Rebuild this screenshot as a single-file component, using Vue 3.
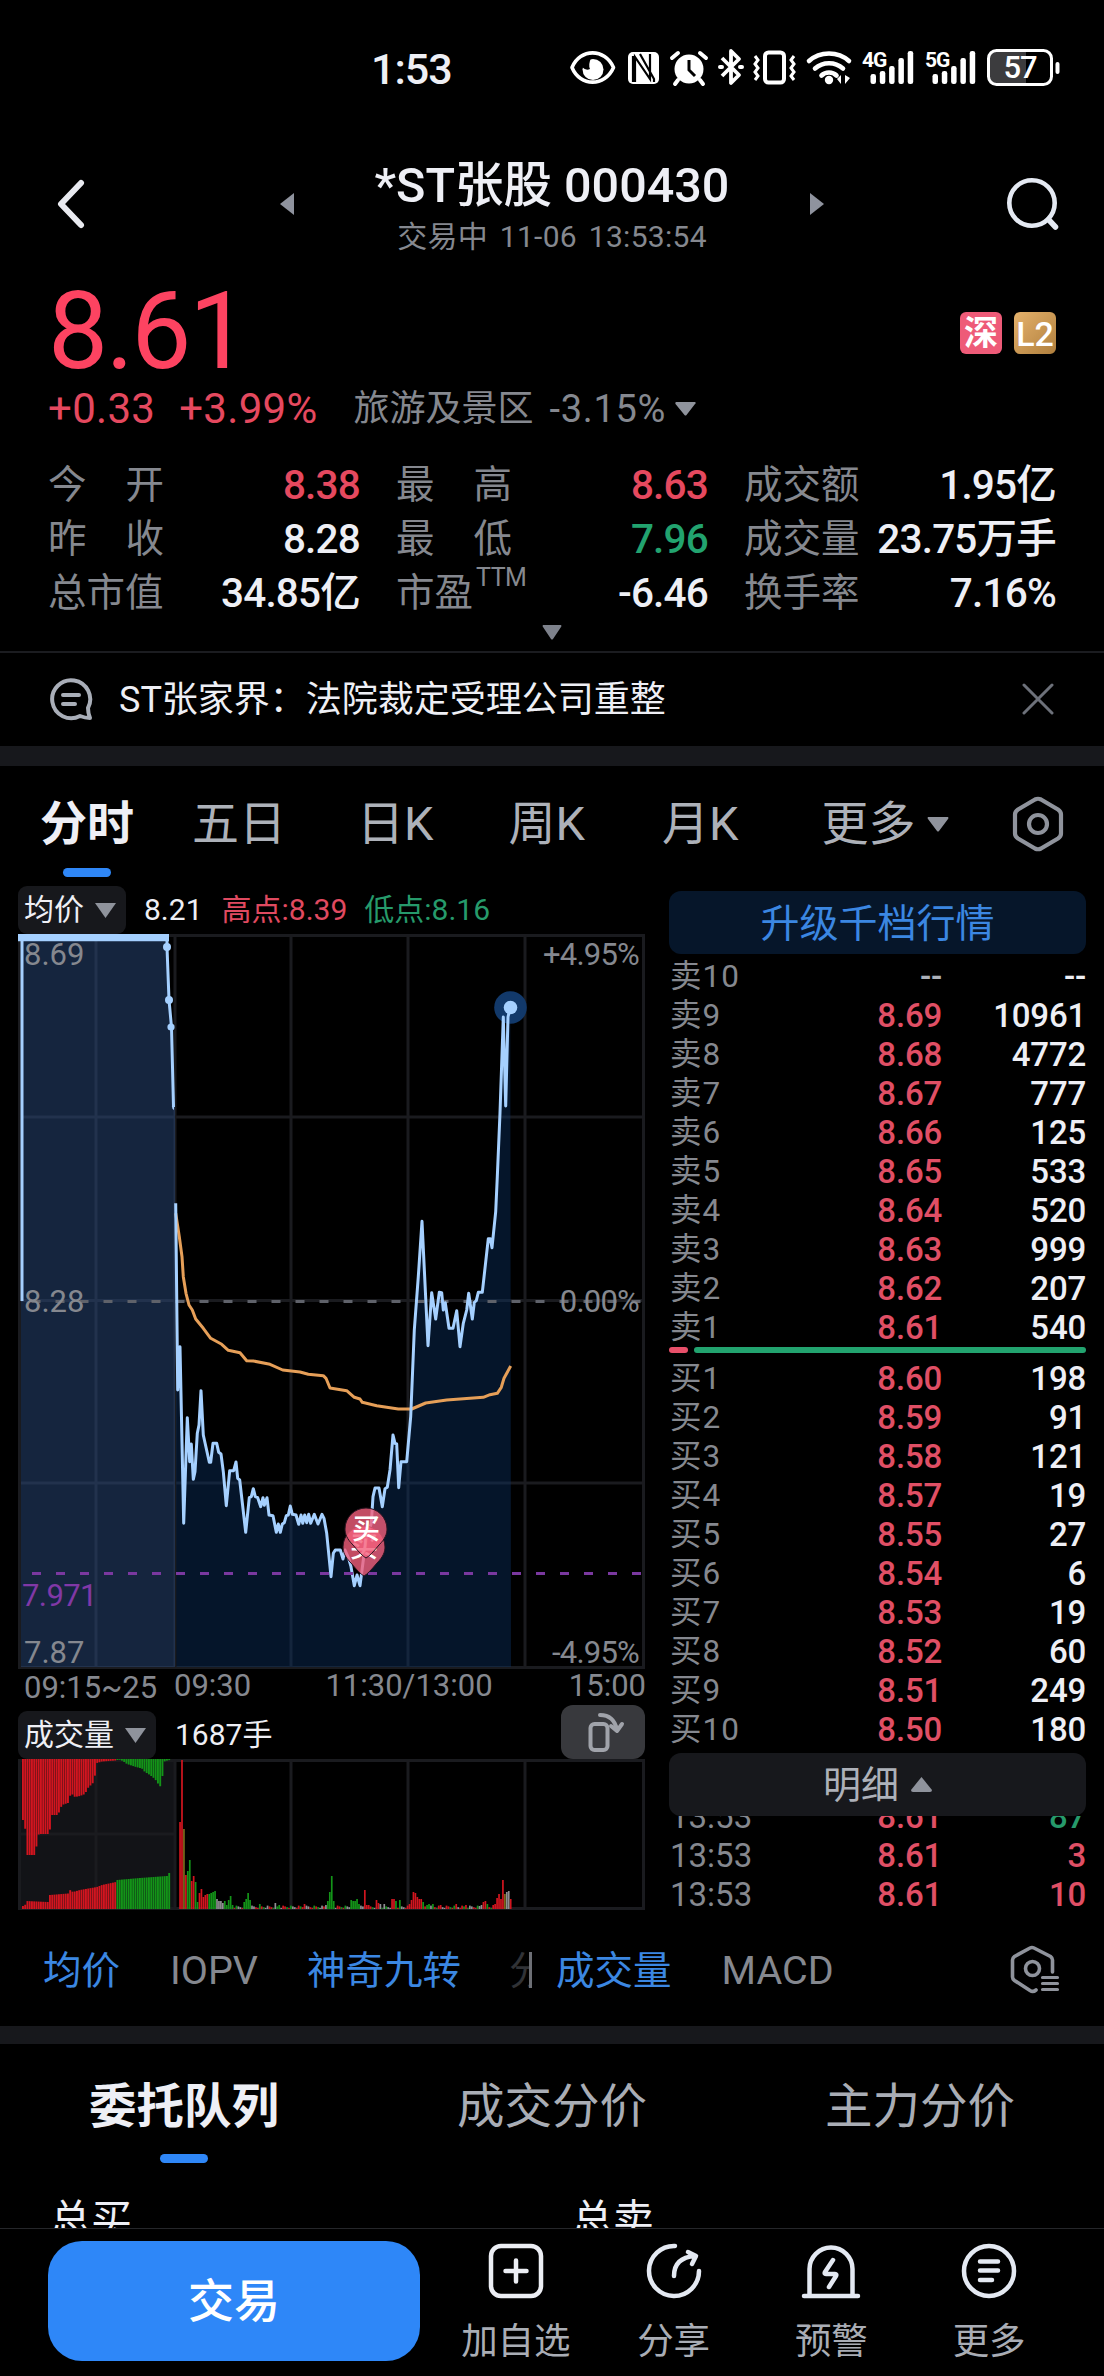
<script setup>
import { computed } from 'vue'

const stats = [
  { label: '今开', value: '8.38', tone: 'up' },
  { label: '最高', value: '8.63', tone: 'up' },
  { label: '成交额', value: '1.95亿' },
  { label: '昨收', value: '8.28' },
  { label: '最低', value: '7.96', tone: 'down' },
  { label: '成交量', value: '23.75万手' },
  { label: '总市值', value: '34.85亿' },
  { label: '市盈', sup: 'TTM', value: '-6.46' },
  { label: '换手率', value: '7.16%' }
]

const periods = ['分时', '五日', '日K', '周K', '月K']

const asks = [
  ['卖10', '--', '--'],
  ['卖9', '8.69', '10961'],
  ['卖8', '8.68', '4772'],
  ['卖7', '8.67', '777'],
  ['卖6', '8.66', '125'],
  ['卖5', '8.65', '533'],
  ['卖4', '8.64', '520'],
  ['卖3', '8.63', '999'],
  ['卖2', '8.62', '207'],
  ['卖1', '8.61', '540']
]

const bids = [
  ['买1', '8.60', '198'],
  ['买2', '8.59', '91'],
  ['买3', '8.58', '121'],
  ['买4', '8.57', '19'],
  ['买5', '8.55', '27'],
  ['买6', '8.54', '6'],
  ['买7', '8.53', '19'],
  ['买8', '8.52', '60'],
  ['买9', '8.51', '249'],
  ['买10', '8.50', '180']
]

const ticks = [
  ['13:53', '8.61', '87', 'down'],
  ['13:53', '8.61', '3', 'up'],
  ['13:53', '8.61', '10', 'up']
]

const sections = ['委托队列', '成交分价', '主力分价']

const gridX = [96, 175, 291, 408, 525]

// 分时线，以 1/3 像素为单位，原点 (160, 1150)
const priceRaw = `47,160 53,720 60,590 71,1120 82,803 89,935 94,882 100,988 105,965 112,850 117,825 123,722
130,855 148,937 152,937 159,880 170,880 176,907 183,912 190,965 199,1067 209,962 221,962 228,936 233,985
239,990 257,1147 268,1043 274,1040 280,1016 286,1040 293,1043 302,1070 309,1043 313,1066 321,1043 327,1095
339,1097 349,1147 355,1122 361,1147 367,1122 373,1118 379,1097 385,1095 391,1068 397,1093 408,1095 416,1123
423,1095 428,1120 434,1095 440,1118 446,1093 452,1120 463,1093 474,1122 486,1093 492,1105 500,1150 513,1280
520,1210 526,1200 541,1200 549,1227 555,1200 566,1225 573,1250 583,1307 591,1275 600,1307 610,1230 618,1170
634,1120 639,1040 645,1014 657,1014 667,1070 675,1016 682,1012 690,960 699,855 705,880 710,882 716,1013
723,935 740,935 752,800 763,540 775,380 786,214 804,587 815,428 827,507 838,427 845,428 850,480 856,458
867,535 879,535 890,482 900,590 910,520 920,480 926,430 937,507 943,457 949,452 955,427 967,427 985,266
991,266 996,293 1007,185 1012,80 1020,-111 1030,-399 1037,-132 1044,-399 1051,-428`

const avgRaw = `47,190 58,260 66,320 70,380 78,430 87,465 97,480 107,507 130,535 152,565 185,583 205,601 240,608
260,632 280,633 330,643 368,660 420,666 445,673 490,677 498,685 510,714 560,722 583,742 600,747 607,757
650,767 715,777 755,777 797,759 860,750 970,742 990,734 1012,730 1024,712 1032,685 1052,648`

function toPoints(raw) {
  return raw
    .trim()
    .split(/\s+/)
    .map(p => {
      const [x, y] = p.split(',').map(Number)
      return `${(160 + x / 3).toFixed(1)},${(1150 + y / 3).toFixed(1)}`
    })
    .join(' ')
}

const priceLine = toPoints(priceRaw)
const avgLine = toPoints(avgRaw)
const priceArea = computed(() => `176.5,1667 ${priceLine} 511,1667`)

// 集合竞价量：[x, 长度]
const unmatched = [
  [22, 61], [24, 61], [25, 96], [35, 96], [36, 79], [38, 75], [48, 75], [50, 66], [51, 56], [57, 56],
  [61, 46], [67, 44], [68, 38], [71, 35], [74, 38], [79, 37], [84, 35], [87, 29], [93, 23], [96, 4],
  [101, 2.5], [115, 1.5], [118, 0.5], [122, 2], [126, 5], [135, 8], [141, 9.5], [144, 13], [149, 16],
  [154, 20], [158, 26], [161, 29], [162, 5], [164, 2], [169, 1]
]
const matched = [
  [22, 3], [24, 3], [25, 8], [47, 7], [49, 14], [67, 15.5], [69, 19], [72, 17], [79, 19], [96, 22],
  [101, 24], [115, 27], [116, 29], [139, 31], [166, 33], [169, 37]
]

function at(profile, x) {
  for (let i = 1; i < profile.length; i++) {
    const [x0, y0] = profile[i - 1]
    const [x1, y1] = profile[i]
    if (x <= x1) return y0 + ((x - x0) / (x1 - x0)) * (y1 - y0)
  }
  return profile[profile.length - 1][1]
}

const auctionBars = Array.from({ length: 66 }, (_, i) => {
  const x = 22 + i * 2.25
  return { x, top: at(unmatched, x), bottom: at(matched, x), cls: x < 115.5 ? 'bar-r' : 'bar-g' }
})

// 成交量主要柱：分钟序号 -> [高度, 颜色]
const peaks = {
  0: [87, 'r'], 1: [149, 'r'], 2: [80, 'o'], 3: [34, 'r'], 4: [38, 'g'], 5: [49, 'g'], 6: [28, 'r'],
  7: [33, 'r'], 8: [27, 'g'], 9: [7, 'g'], 10: [16, 'r'], 11: [20, 'r'], 12: [12, 'r'], 13: [14, 'r'],
  14: [15, 'r'], 15: [15, 'g'], 16: [16, 'g'], 17: [17, 'g'], 18: [18, 'g'], 19: [10, 'w'], 20: [8, 'w'],
  21: [8, 'w'], 22: [6, 'w'], 23: [8, 'g'], 24: [4, 'g'], 25: [9, 'g'], 26: [13, 'g'], 27: [4, 'g'],
  33: [7, 'g'], 34: [10, 'g'], 35: [16, 'g'], 36: [9, 'g'], 41: [5, 'g'], 49: [6, 'w'], 51: [4, 'g'],
  64: [5, 'r'], 75: [4, 'w'], 76: [8, 'g'], 77: [17, 'g'], 78: [33, 'g'], 79: [8, 'g'], 88: [9, 'g'],
  89: [8, 'g'], 90: [8, 'g'], 91: [10, 'g'], 92: [5, 'g'], 95: [19, 'r'], 96: [4, 'r'], 97: [4, 'r'],
  101: [9, 'r'], 102: [6, 'r'], 103: [5, 'w'], 105: [5, 'w'], 109: [10, 'r'], 110: [10, 'r'],
  111: [8, 'g'], 113: [9, 'g'], 118: [5, 'r'], 119: [9, 'r'], 120: [17, 'r'], 121: [16, 'r'],
  122: [12, 'r'], 123: [10, 'r'], 124: [10, 'r'], 125: [7, 'g'], 127: [4, 'g'], 128: [5, 'g'],
  130: [5, 'g'], 134: [4, 'r'], 142: [5, 'r'], 147: [4, 'r'], 154: [3, 'w'], 155: [4, 'w'],
  156: [7, 'r'], 157: [8, 'r'], 158: [5, 'g'], 161: [4, 'r'], 162: [5, 'r'], 163: [11, 'r'],
  164: [15, 'r'], 165: [10, 'r'], 166: [29, 'r'], 167: [15, 'o'], 168: [17, 'w'], 169: [18, 'w'],
  170: [10, 'r']
}
const tones = ['r', 'w', 'g', 'w', 'r', 'g', 'r']
const volumeBars = Array.from({ length: 171 }, (_, i) => {
  const [h, c] = peaks[i] || [1 + ((i * 7) % 4) * 0.8, tones[(i * 5) % 7]]
  return { x: 179.2 + i * 1.945, h, cls: 'bar-' + c }
})

const pins = [
  { x: 364, y: 1547 },
  { x: 366, y: 1529 }
]

const signalBars = [10, 13, 18, 26, 33]
</script>

<template>
  <div class="page">
    <div class="status">
      <span class="clock">1:53</span>
      <svg class="status-icons" viewBox="565 44 500 46" width="500" height="46" fill="none">
        <path d="M572 67.500C580 48 605 48 613.500 67.500C605 87 580 87 572 67.500Z" stroke="#fff" stroke-width="3.600" stroke-linejoin="round" />
        <circle cx="593" cy="69.500" r="10.500" fill="#fff" />
        <path d="M583 58h8q-3 7-1 11-4 2-8-2z" fill="#000" />
        <rect x="628" y="52" width="31" height="32" rx="5" fill="#fff" />
        <path d="M635 82V57l15 22V54M640 54l14 25V82M633 56v26" stroke="#000" stroke-width="2.200" />
        <circle cx="689" cy="69" r="14.500" fill="#fff" />
        <path d="M689 60v10l6 6" stroke="#000" stroke-width="3" />
        <path d="M672 58l6-5M706 58l-6-5M678 80l-3 4M700 80l3 4" stroke="#fff" stroke-width="4" stroke-linecap="round" />
        <path d="M722 58l17 17-8 8V51l8 8-17 17" stroke="#fff" stroke-width="3.800" stroke-linejoin="round" />
        <path d="M720 67h2M740 67h2" stroke="#fff" stroke-width="4" stroke-linecap="round" />
        <rect x="765" y="52.500" width="19" height="30" rx="3.500" stroke="#fff" stroke-width="4" />
        <path d="M755 56l3 4-3 4 3 4-3 4 3 4-3 4M794 56l-3 4 3 4-3 4 3 4-3 4 3 4" stroke="#fff" stroke-width="3" />
        <path d="M809 61c11-10 29-10 40 0M815 68.500c8-7 20-7 28 0M821.500 75.500c4-4 11-4 15 0" stroke="#fff" stroke-width="4.600" stroke-linecap="round" />
        <circle cx="829" cy="80" r="4.200" fill="#fff" />
        <path d="M837 79l4-4v9zM850 78l-5 6v-9z" fill="#fff" />
        <text x="862" y="67" class="net">4G</text>
        <text x="925" y="67" class="net">5G</text>
        <template v-for="x0 in [870.500, 932.500]" :key="x0">
          <rect v-for="(h, i) in signalBars" :key="i" :x="x0 + i * 9.300" :y="84 - h" width="5.500" :height="h" rx="2.300" fill="#fff" />
        </template>
        <path d="M990 51h36v33h-30a7 7 0 0 1-7-7z" fill="#3c3c3e" />
        <rect x="988.500" y="50.500" width="63" height="34" rx="8" stroke="#fff" stroke-width="3" />
        <path d="M1057.500 64v8" stroke="#fff" stroke-width="4" stroke-linecap="round" />
        <text x="1020" y="78" class="battery" text-anchor="middle">57</text>
      </svg>
    </div>

    <header class="header">
      <svg class="back" width="32" height="52" viewBox="0 0 32 52" fill="none" stroke="#e9eaf0" stroke-width="6" stroke-linecap="round" stroke-linejoin="round">
        <path d="M26 5L6 26l20 21" />
      </svg>
      <svg class="prev" width="14" height="22" viewBox="0 0 14 22"><path d="M14 0v22L0 11z" fill="#8f939e" /></svg>
      <div class="heading">
        <div class="name">*ST张股 000430</div>
        <div class="sub">交易中 11-06 13:53:54</div>
      </div>
      <svg width="14" height="22" viewBox="0 0 14 22"><path d="M0 0v22l14-11z" fill="#8f939e" /></svg>
      <svg class="search" width="56" height="56" viewBox="0 0 56 56" fill="none" stroke="#e4e9f2" stroke-linecap="round">
        <circle cx="27" cy="27" r="22.700" stroke-width="4.600" />
        <path d="M43.500 43.500l7 7.500" stroke-width="5.500" />
      </svg>
    </header>

    <section class="quote">
      <div class="price-row">
        <span class="price">8.61</span>
        <div class="badges">
          <span class="badge sz">深</span>
          <span class="badge l2">L2</span>
        </div>
      </div>
      <div class="change">
        <span class="delta">+0.33</span>
        <span class="delta pct">+3.99%</span>
        <span class="sector">旅游及景区</span>
        <span class="sector-pct">-3.15%</span>
        <svg width="21" height="14" viewBox="0 0 21 14"><path d="M1 0h19q1.500 1 0 2L11.500 13q-1 1-2 0L.5 2Q0 .5 1 0z" fill="#8f939c" /></svg>
      </div>
      <div class="stats">
        <div v-for="s in stats" :key="s.label" class="stat">
          <span class="stat-label" :class="{ spread: s.label.length === 2 && !s.sup }">
            <i v-for="ch in s.label" :key="ch">{{ ch }}</i><sup v-if="s.sup">{{ s.sup }}</sup>
          </span>
          <span class="stat-value" :class="s.tone">{{ s.value }}</span>
        </div>
      </div>
      <svg class="expand" width="20" height="15" viewBox="0 0 20 15"><path d="M1 0h18q1 1 0 2l-8 12q-1 1-2 0L1 2Q0 1 1 0z" fill="#7d818b" /></svg>
    </section>

    <div class="news">
      <svg width="44" height="44" viewBox="0 0 44 44" fill="none" stroke="#a9aeb8" stroke-width="4" stroke-linecap="round" stroke-linejoin="round">
        <path d="M39 31a19 19 0 1 0-8 8q5 2 10 2-2-5-2-10z" />
        <path d="M14 18h16M14 27h12" />
      </svg>
      <span class="news-text">ST张家界：法院裁定受理公司重整</span>
      <svg class="close" width="32" height="32" viewBox="0 0 32 32" stroke="#6d717a" stroke-width="3" stroke-linecap="round"><path d="M2 2l28 28M30 2L2 30" /></svg>
    </div>

    <div class="band"></div>

    <nav class="periods">
      <span v-for="(p, i) in periods" :key="p" class="period" :class="{ active: i === 0 }">{{ p }}</span>
      <span class="period more">更多</span>
      <svg class="more-arrow" width="22" height="15" viewBox="0 0 22 15"><path d="M1 0h20q1 1 0 2l-9 12q-1 1-2 0L1 2Q0 1 1 0z" fill="#8f939c" /></svg>
      <svg class="gear" width="52" height="56" viewBox="0 0 52 56" fill="none" stroke="#8f939c" stroke-width="4.200" stroke-linejoin="round">
        <path d="M23 3.500q3-1.500 6 0l17 10q3 2 3 5v19q0 3-3 5l-17 10q-3 1.500-6 0l-17-10q-3-2-3-5v-19q0-3 3-5z" />
        <circle cx="26" cy="28" r="9" />
      </svg>
    </nav>

    <main class="board">
      <div class="charts">
        <div class="chart-head">
          <span class="chip">均价<svg width="21" height="15" viewBox="0 0 21 15"><path d="M0 0h21L10.500 15z" fill="#8f939c" /></svg></span>
          <span class="avg">8.21</span>
          <span class="hi">高点:8.39</span>
          <span class="lo">低点:8.16</span>
        </div>
        <svg class="price-chart" width="627" height="777" viewBox="18 934 627 777" fill="none">
          <g stroke="#1a1b1f" stroke-width="3">
            <rect x="19.500" y="935.500" width="624" height="732" />
            <path v-for="x in gridX" :key="x" :d="`M${x} 935V1667`" />
            <path d="M19 1117H644M19 1300.500H644M19 1483H644" />
          </g>
          <path d="M21 937H167L175 1107V1667H21z" fill="#2a4a7c" fill-opacity=".5" />
          <polygon :points="priceArea" fill="#0c3468" fill-opacity=".4" />
          <path d="M31.500 1301.500H645" stroke="#5f626a" stroke-width="3" stroke-dasharray="9 15" />
          <g class="axis">
            <text x="24" y="965">8.69</text>
            <text x="24" y="1312">8.28</text>
            <text x="24" y="1663">7.87</text>
            <text x="639" y="965" class="rate">+4.95%</text>
            <text x="639" y="1312" class="rate">0.00%</text>
            <text x="639" y="1663" class="rate">-4.95%</text>
            <text x="24" y="1698">09:15~25</text>
            <text x="174" y="1695.500">09:30</text>
            <text x="409" y="1695.500" text-anchor="middle">11:30/13:00</text>
            <text x="646" y="1695.500" text-anchor="end">15:00</text>
            <text x="22" y="1606" class="ma">7.971</text>
          </g>
          <g stroke="#a5d0ff">
            <path d="M18 937.500H169" stroke-width="7.500" />
            <path d="M22 940V1301M167 940V947L169 1000 171.500 1027 173.500 1107" stroke-width="3" />
          </g>
          <g fill="#a5d0ff">
            <circle cx="167" cy="947" r="4" />
            <circle cx="169" cy="1000" r="4" />
            <circle cx="171" cy="1027" r="3.600" />
            <path d="M174 1103a4 4 0 0 0 0 7z" />
          </g>
          <circle cx="510.500" cy="1007.500" r="16.300" fill="#12396a" />
          <polyline :points="avgLine" stroke="#e69f58" stroke-width="3" stroke-linejoin="round" />
          <polyline :points="priceLine" stroke="#a5d0ff" stroke-width="3" stroke-linejoin="round" />
          <circle cx="510.500" cy="1007.500" r="6.800" fill="#a5d0ff" />
          <path d="M32 1573.500H642" stroke="#7a389f" stroke-width="3" stroke-dasharray="9 15" />
          <g v-for="p in pins" :key="p.y" :transform="`translate(${p.x} ${p.y})`">
            <path d="M0 29Q-4 27-13 16C-19 10-21 5-21 0a21 21 0 0 1 42 0c0 5-2 10-8 16Q4 27 0 29z" fill="#f25f7c" fill-opacity=".8" stroke="#2a1420" stroke-width="1" />
            <text y="10" text-anchor="middle" class="pin">买</text>
          </g>
        </svg>

        <div class="volume-head">
          <span class="chip">成交量<svg width="21" height="15" viewBox="0 0 21 15"><path d="M0 0h21L10.500 15z" fill="#8f939c" /></svg></span>
          <span class="volume">1687手</span>
          <span class="rotate">
            <svg width="84" height="54" viewBox="0 0 84 54" fill="none" stroke="#a0a3aa" stroke-width="4">
              <rect x="29.500" y="19" width="17" height="26" rx="4" />
              <path d="M39 10c9 0 15 5 17 15M50 21l6 5 5-7" stroke-linecap="round" stroke-linejoin="round" />
            </svg>
          </span>
        </div>
        <svg class="volume-chart" width="627" height="151" viewBox="18 1759 627 151" fill="none">
          <rect x="20" y="1760" width="155" height="148" fill="#121317" />
          <g stroke="#1a1b1f" stroke-width="3">
            <rect x="19.500" y="1760.500" width="624" height="148" />
            <path v-for="x in gridX" :key="x" :d="`M${x} 1760V1908`" />
            <path d="M20 1834H175" />
          </g>
          <g v-for="b in auctionBars" :key="b.x" :class="b.cls">
            <rect :x="b.x" y="1759" width="1.900" :height="b.top" />
            <rect :x="b.x" :y="1909 - b.bottom" width="1.900" :height="b.bottom" />
          </g>
          <rect v-for="b in volumeBars" :key="b.x" :x="b.x" :y="1909 - b.h" width="1.700" :height="b.h" :class="b.cls" />
        </svg>
      </div>

      <aside class="book">
        <div class="upgrade">升级千档行情</div>
        <div v-for="r in asks" :key="r[0]" class="level">
          <span class="lv">{{ r[0] }}</span>
          <span class="px" :class="{ none: r[1] === '--' }">{{ r[1] }}</span>
          <span class="qty">{{ r[2] }}</span>
        </div>
        <div class="ratio"><i class="ratio-buy"></i><i class="ratio-sell"></i></div>
        <div v-for="r in bids" :key="r[0]" class="level">
          <span class="lv">{{ r[0] }}</span>
          <span class="px">{{ r[1] }}</span>
          <span class="qty">{{ r[2] }}</span>
        </div>
        <div class="detail">明细<svg width="21" height="15" viewBox="0 0 21 15"><path d="M10.500 0L21 13q0 2-2 2H2Q0 15 0 13z" fill="#8f939c" /></svg></div>
        <div class="ticks">
          <div v-for="(t, i) in ticks" :key="i" class="level tick">
            <span class="lv">{{ t[0] }}</span>
            <span class="px">{{ t[1] }}</span>
            <span class="qty" :class="t[3]">{{ t[2] }}</span>
          </div>
        </div>
      </aside>
    </main>

    <div class="indicators">
      <span class="ind on">均价</span>
      <span class="ind iopv">IOPV</span>
      <span class="ind on nine">神奇九转</span>
      <span class="ind cut">分</span>
      <i class="divider"></i>
      <span class="ind on vol">成交量</span>
      <span class="ind macd">MACD</span>
      <svg class="ind-set" width="50" height="50" viewBox="0 0 50 50" fill="none" stroke="#8f939c" stroke-width="3.600" stroke-linecap="round">
        <path d="M42.500 27V15q0-2-2-3.500L24 3q-2-1-4 0L4.500 11.500q-2 1.500-2 3.500v17q0 2 2 3.500L20 45.500q3 2 6-.5" />
        <circle cx="22.500" cy="23.500" r="7" />
        <path d="M32.500 32.500h15M32.500 38.500h15M32.500 44.500h15" stroke-width="3.200" />
      </svg>
    </div>

    <div class="band thin"></div>

    <nav class="sections">
      <span v-for="(s, i) in sections" :key="s" class="section" :class="{ active: i === 0 }">{{ s }}</span>
    </nav>
    <div class="totals">
      <span>总买</span>
      <span>总卖</span>
    </div>

    <footer class="footer">
      <div class="trade">交易</div>
      <div class="action">
        <svg width="58" height="58" viewBox="0 0 58 58" fill="none" stroke="#eceef4" stroke-width="4.500" stroke-linecap="round">
          <rect x="4" y="4" width="50" height="50" rx="10" />
          <path d="M29 18.500v21M18.500 29h21" />
        </svg>
        <span>加自选</span>
      </div>
      <div class="action">
        <svg width="58" height="58" viewBox="0 0 58 58" fill="none" stroke="#e4e9f2" stroke-width="4.500" stroke-linecap="round" stroke-linejoin="round">
          <path d="M30 4A25 25 0 1 0 54 29" />
          <path d="M29 34c0-12 7-19 21-20M43 10l8 4-4 8" />
        </svg>
        <span>分享</span>
      </div>
      <div class="action">
        <svg width="62" height="58" viewBox="0 0 62 58" fill="none" stroke="#e4e9f2" stroke-width="4.500" stroke-linecap="round" stroke-linejoin="round">
          <path d="M4 54h54M9.500 54V27a21.500 21.500 0 0 1 43 0v27" />
          <path d="M33 18l-8 12q-1 2 1 2h9q2 0 1 2l-7 11" />
        </svg>
        <span>预警</span>
      </div>
      <div class="action">
        <svg width="58" height="58" viewBox="0 0 58 58" fill="none" stroke="#e4e9f2" stroke-width="4.500" stroke-linecap="round">
          <circle cx="29" cy="29" r="25" />
          <path d="M20 19.500h18M20 28.500h18M20 38h12" />
        </svg>
        <span>更多</span>
      </div>
    </footer>
  </div>
</template>

<style>
body {
  background: #000;
}
</style>

<style scoped>
.page {
  width: 1104px;
  height: 2376px;
  overflow: hidden;
  background: #000;
  color: #eeeff5;
  font-family: Roboto, "Noto Sans CJK SC", sans-serif;
  font-size: 36px;
  line-height: 1;
  white-space: nowrap;
}

.page * {
  box-sizing: border-box;
}

svg {
  display: block;
  flex: none;
}

i {
  font-style: normal;
}

/* 状态栏 */
.status {
  display: flex;
  height: 130px;
  padding: 44px 39px 0 371px;
  justify-content: space-between;
}

.clock {
  font-size: 43px;
  font-weight: 500;
  line-height: 50px;
  letter-spacing: -1px;
}

.net {
  fill: #fff;
  font-size: 21px;
  font-weight: 700;
  letter-spacing: -1px;
}

.battery {
  fill: #fff;
  font-size: 31px;
  font-weight: 500;
  letter-spacing: -1px;
}

/* 标题 */
.header {
  display: flex;
  align-items: center;
  height: 148px;
  padding: 0 43px 0 55px;
}

.prev {
  margin-left: 193px;
}

.heading {
  width: 516px;
  text-align: center;
}

.name {
  margin-top: 6px;
  font-size: 48.500px;
  font-weight: 500;
  line-height: 58px;
}

.sub {
  margin-top: 2px;
  color: #85888f;
  font-size: 30px;
  line-height: 40px;
  letter-spacing: 0.3px;
  word-spacing: 4px;
}

.search {
  margin-left: auto;
}

/* 报价 */
.quote {
  height: 373px;
  padding: 0 48px;
}

.price-row {
  display: flex;
  justify-content: space-between;
  height: 102px;
}

.price {
  color: #fd4361;
  font-size: 107px;
  line-height: 107px;
  letter-spacing: -2.500px;
}

.badges {
  display: flex;
  gap: 12px;
  padding-top: 34px;
}

.badge {
  width: 42px;
  height: 42px;
  border-radius: 6px;
  color: #fff;
  text-align: center;
  line-height: 42px;
}

.sz {
  background: #ee5b78;
  font-size: 34px;
  font-weight: 700;
}

.l2 {
  background: linear-gradient(135deg, #e5b26c, #b07f3d);
  font-size: 34px;
  font-weight: 500;
  line-height: 44px;
}

.change {
  display: flex;
  align-items: center;
  height: 58px;
  color: #85888f;
}

.delta {
  color: #e5495f;
  font-size: 42px;
  letter-spacing: 0.3px;
}

.pct {
  margin-left: 24px;
}

.sector {
  margin-left: 36px;
}

.sector-pct {
  margin: 0 9px 0 16px;
  font-size: 38px;
  letter-spacing: 0.7px;
}

.stats {
  display: grid;
  grid-template-columns: repeat(3, 312px);
  column-gap: 36px;
  margin-top: 20px;
}

.stat {
  display: flex;
  align-items: center;
  justify-content: space-between;
  height: 54px;
}

.stat-label {
  display: flex;
  color: #85888f;
  font-size: 38.500px;
  line-height: 54px;
}

.spread {
  width: 116px;
  justify-content: space-between;
}

sup {
  margin-left: 3px;
  font-size: 25px;
  line-height: 24px;
  letter-spacing: -0.5px;
}

.stat-value {
  font-size: 40.500px;
  font-weight: 500;
  line-height: 54px;
  letter-spacing: -0.8px;
}

.up {
  color: #e5495f;
}

.down {
  color: #22a36f;
}

.expand {
  margin: 5px auto 0;
}

/* 公告 */
.news {
  display: flex;
  align-items: center;
  height: 95px;
  padding: 0 50px 2px 49px;
  border-top: 2px solid #1b1c20;
}

.news-text {
  margin-left: 26px;
  padding-top: 3px;
}

.close {
  margin-left: auto;
}

.band {
  height: 20px;
  background: #17181c;
}

/* 周期切换 */
.periods {
  display: flex;
  align-items: center;
  height: 116px;
  margin-bottom: 4px;
  padding: 0 40px;
}

.period {
  position: relative;
  margin-right: 58px;
  color: #adb1b9;
  font-size: 47px;
  line-height: 116px;
}

.period:nth-child(2) {
  margin-right: 71px;
}

.period:nth-child(3) {
  margin-right: 75px;
}

.period:nth-child(4) {
  margin-right: 77px;
}

.period:nth-child(5) {
  margin-right: 83px;
}

.active {
  color: #eeeff5;
  font-weight: 700;
}

.active::after {
  content: '';
  position: absolute;
  left: 50%;
  bottom: 5px;
  width: 48px;
  height: 9px;
  margin-left: -24px;
  border-radius: 5px;
  background: #2f87f7;
}

.period.more {
  margin-right: 11px;
}

.gear {
  margin-left: auto;
}

.board {
  display: flex;
  height: 1025px;
  padding-left: 18px;
}

.charts {
  width: 627px;
}

.chart-head,
.volume-head {
  display: flex;
  align-items: center;
  height: 48px;
  font-size: 30px;
}

.chip {
  display: flex;
  align-items: center;
  gap: 11px;
  height: 48px;
  padding: 0 10px 0 6px;
  border-radius: 9px;
  background: #17181c;
  font-size: 30px;
}

.avg {
  margin-left: 18px;
}

.hi {
  margin-left: 19px;
  color: #e04a60;
}

.lo {
  margin-left: 17px;
  color: #269a6b;
}

.volume {
  margin-left: 19px;
}

.rotate {
  align-self: flex-end;
  margin-left: auto;
  border-radius: 12px;
  background: #38393d;
}

.axis {
  fill: #85888f;
  font-size: 31px;
}

.rate {
  text-anchor: end;
  letter-spacing: -0.8px;
}

.ma {
  fill: #8038a6;
  letter-spacing: -0.6px;
}

.pin {
  fill: #fff;
  font-size: 28px;
  font-weight: 500;
}

.bar-r {
  fill: #d2151f;
}

.bar-g {
  fill: #139418;
}

.bar-o {
  fill: #7d6a1c;
}

.bar-w {
  fill: #8f8f92;
}

/* 盘口 */
.book {
  width: 417px;
  margin: 5px 0 0 24px;
}

.upgrade,
.detail {
  display: flex;
  align-items: center;
  justify-content: center;
  height: 63px;
  border-radius: 12px;
}

.upgrade {
  margin-bottom: 3px;
  padding-top: 4px;
  background: #06162a;
  color: #3b87e2;
  font-size: 39px;
}

.level {
  display: grid;
  grid-template-columns: 120px 152px 1fr;
  height: 39px;
  padding: 0 0 0 1px;
  line-height: 39px;
}

.lv {
  color: #85888f;
  font-size: 31.500px;
  letter-spacing: 1px;
}

.px,
.qty {
  font-size: 33px;
  font-weight: 500;
  text-align: right;
  letter-spacing: -0.2px;
}

.px {
  padding-right: 0;
  color: #e04f65;
}

.px.none {
  color: #adb1b9;
}

.ratio {
  display: flex;
  gap: 6px;
  height: 12px;
}

.ratio i {
  height: 6px;
  border-radius: 3px;
}

.ratio-buy {
  width: 19px;
  background: #e8506a;
}

.ratio-sell {
  flex: 1;
  background: #22a36f;
}

.detail {
  gap: 12px;
  margin-top: 4px;
  background: #17181c;
  color: #adb1b9;
  font-size: 38px;
}

.ticks {
  height: 110px;
  overflow: hidden;
}

.ticks .level:first-child {
  margin-top: -19px;
}

.tick .lv {
  font-size: 33px;
  letter-spacing: 0;
}

.tick .qty.up {
  color: #e04f65;
}

.tick .qty.down {
  color: #269a6b;
}

/* 指标栏 */
.indicators {
  display: flex;
  align-items: center;
  height: 115px;
  padding: 3px 44px 0 43px;
  color: #85888f;
  font-size: 38.500px;
}

.ind {
  padding-top: 2px;
}

.on {
  color: #3b87e2;
}

.iopv {
  margin-left: 50px;
  font-size: 39.500px;
}

.nine {
  margin-left: 49px;
}

.cut {
  width: 20px;
  margin-left: 48px;
  overflow: hidden;
  color: #303236;
  line-height: 50px;
}

.divider {
  width: 3px;
  height: 36px;
  background: #6d6f75;
}

.vol {
  margin-left: 24px;
}

.macd {
  margin-left: 50px;
  font-size: 39.500px;
}

.ind-set {
  margin-left: auto;
}

.band.thin {
  height: 18px;
}

.sections {
  display: grid;
  grid-template-columns: repeat(3, 1fr);
  height: 124px;
  padding: 0;
  text-align: center;
}

.section {
  position: relative;
  color: #a9adb5;
  font-size: 47.500px;
  line-height: 126px;
}

.section.active {
  color: #eeeff5;
}

.section.active::after {
  bottom: 7px;
}

.totals {
  display: grid;
  grid-template-columns: 522px 1fr;
  height: 60px;
  padding: 26px 0 0 50px;
  overflow: hidden;
  font-size: 41px;
  line-height: 52px;
}

/* 底部操作 */
.footer {
  display: flex;
  height: 148px;
  padding: 12px 36px 0 48px;
  border-top: 1px solid #25262a;
}

.trade {
  width: 372px;
  height: 120px;
  margin-right: 17px;
  border-radius: 34px;
  background: #2e87f8;
  color: #fff;
  font-size: 46px;
  font-weight: 500;
  line-height: 121px;
  text-align: center;
}

.action {
  display: flex;
  flex: 1;
  flex-direction: column;
  align-items: center;
  gap: 22px;
  padding-top: 1px;
  color: #a9adb5;
  font-size: 36.500px;
  line-height: 40px;
}
</style>
